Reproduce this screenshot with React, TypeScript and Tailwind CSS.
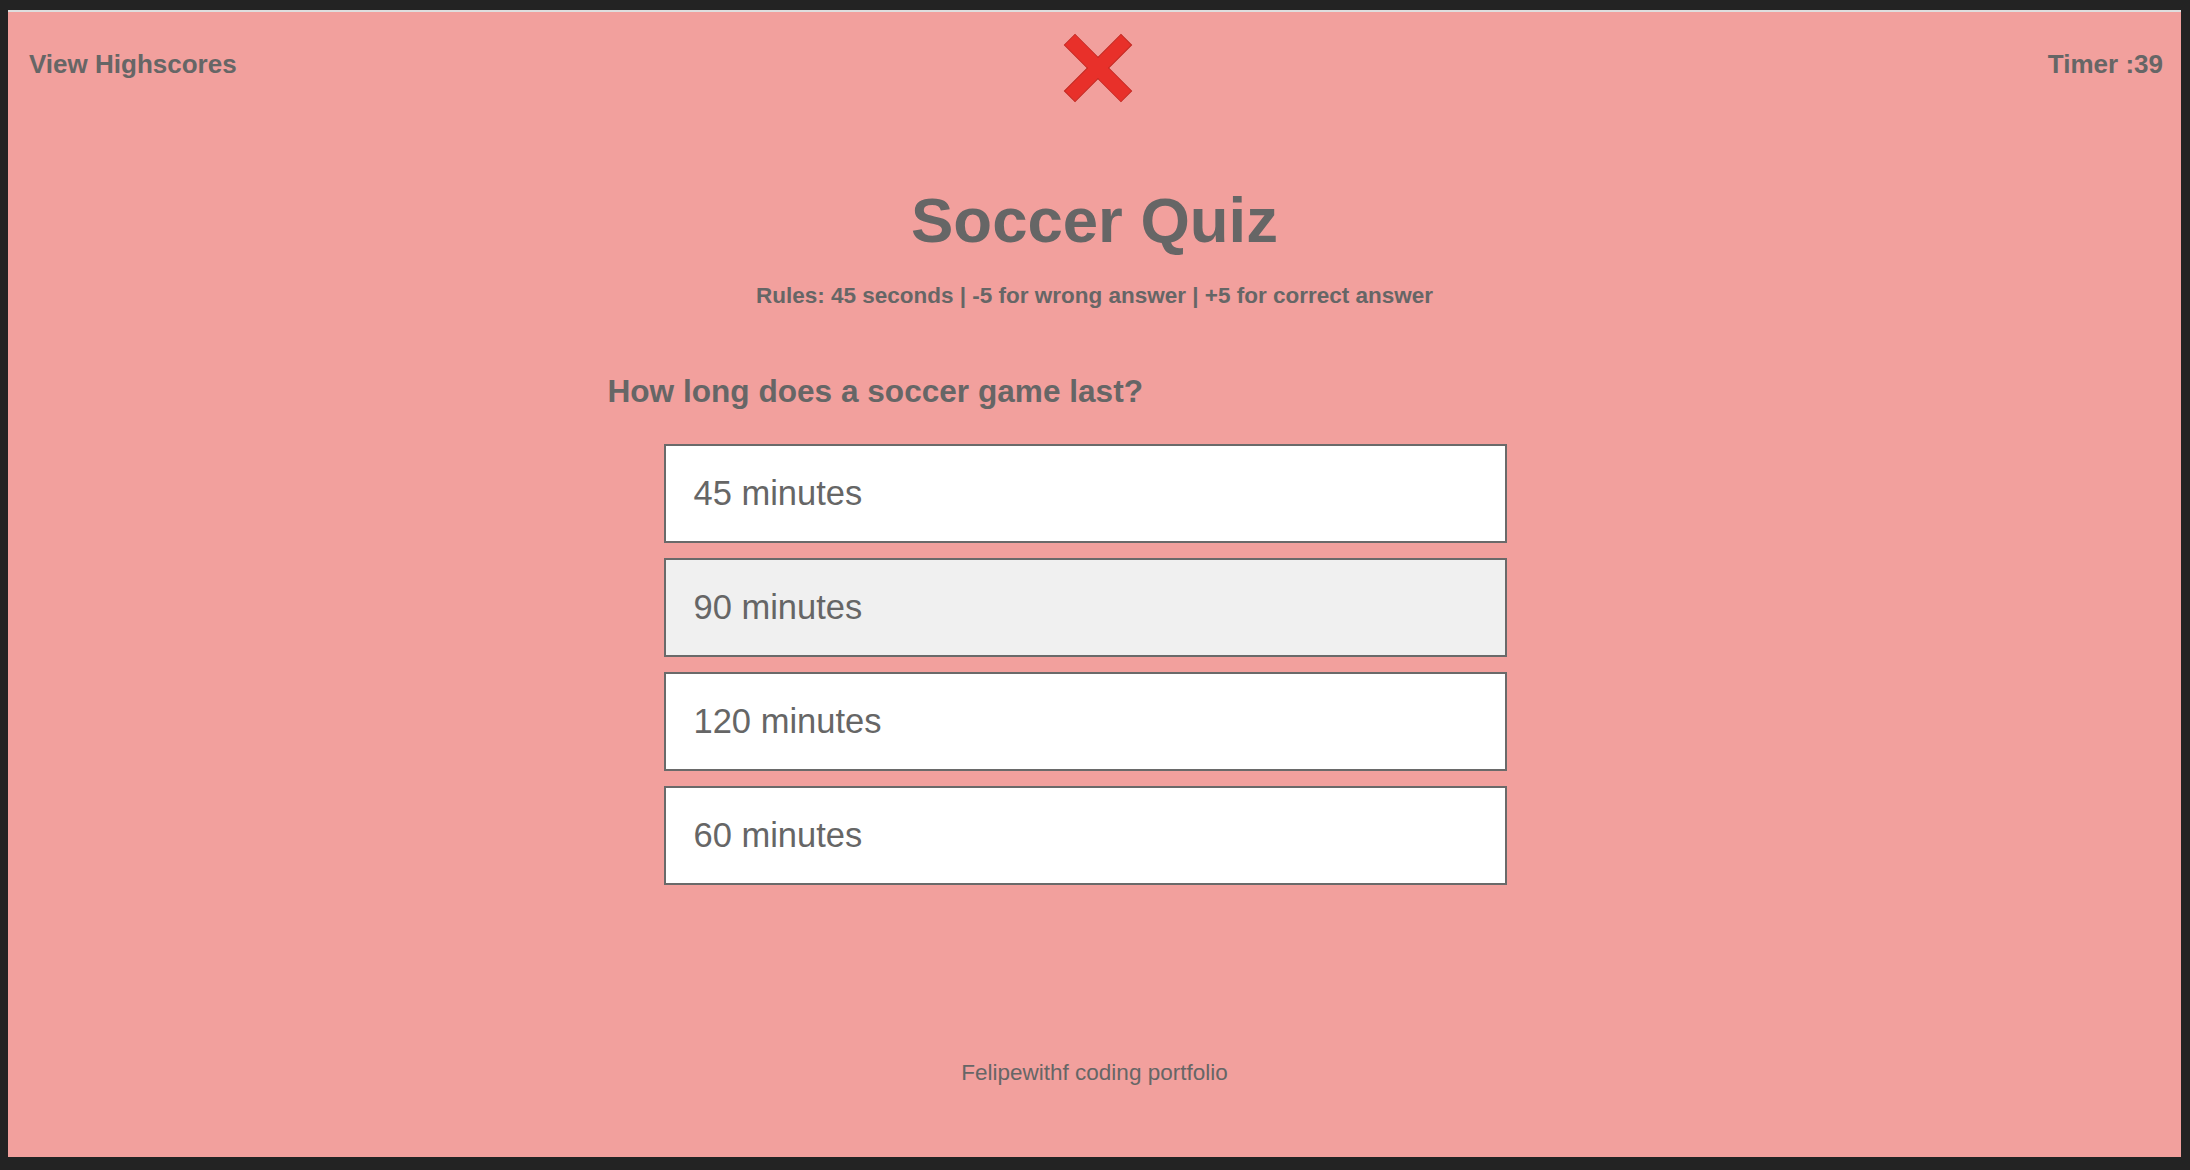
import { useState } from "react";

const answers = ["45 minutes", "90 minutes", "120 minutes", "60 minutes"];

const WrongMark = () => (
	<svg width="70" height="70" viewBox="0 0 70 70" aria-label="wrong">
		<g transform="translate(35 35)" fill="#e8302a" stroke="#c2261f" strokeWidth="1">
			<rect x="-40" y="-7.5" width="80" height="15" transform="rotate(45)" />
			<rect x="-40" y="-7.5" width="80" height="15" transform="rotate(-45)" />
		</g>
		<g transform="translate(35 35)" fill="#e8302a">
			<rect x="-39.5" y="-7" width="79" height="14" transform="rotate(45)" />
		</g>
	</svg>
);

export default function App() {
	const [hovered] = useState(1);

	return (
		<div className="h-[1170px] w-full bg-[#232323] pt-[10px] pl-[8px] pr-[9px] pb-[13px] font-['Liberation_Sans',Arial,sans-serif] text-[#666666]">
			<div className="flex h-full flex-col border-t-2 border-[#dedede] bg-[#f2a09d]">
				<header className="flex items-start justify-between pl-[21px] pr-[18px] pt-[21px]">
					<div className="w-[300px] pt-[16px] text-[26px] font-bold leading-[30px]">
						View Highscores
					</div>
					<div className="ml-[4px]">
						<WrongMark />
					</div>
					<div className="w-[300px] pt-[16px] text-right text-[26px] font-bold leading-[30px]">
						Timer :39
					</div>
				</header>

				<h1 className="mt-[80px] text-center text-[63.5px] font-bold leading-[74px]">
					Soccer Quiz
				</h1>
				<p className="mt-[26px] text-center text-[22.5px] font-bold leading-[26px]">
					Rules: 45 seconds | -5 for wrong answer | +5 for correct answer
				</p>

				<div className="mx-auto mt-[64px] w-[976px] pl-[1px]">
					<h2 className="text-[31.6px] font-bold leading-[37px]">
						How long does a soccer game last?
					</h2>
					<ul className="ml-[56px] mt-[34px] flex w-[843px] flex-col gap-[15px]">
						{answers.map((a, i) => (
							<li
								key={a}
								className={`flex h-[99px] items-center border-2 border-[#6a6a6a] pl-[28px] text-[34.5px] ${
									i === hovered ? "bg-[#f0f0f0]" : "bg-white"
								}`}
							>
								{a}
							</li>
						))}
					</ul>
				</div>

				<footer className="mt-[175px] text-center text-[22.5px] leading-[26px]">
					Felipewithf coding portfolio
				</footer>
			</div>
		</div>
	);
}
